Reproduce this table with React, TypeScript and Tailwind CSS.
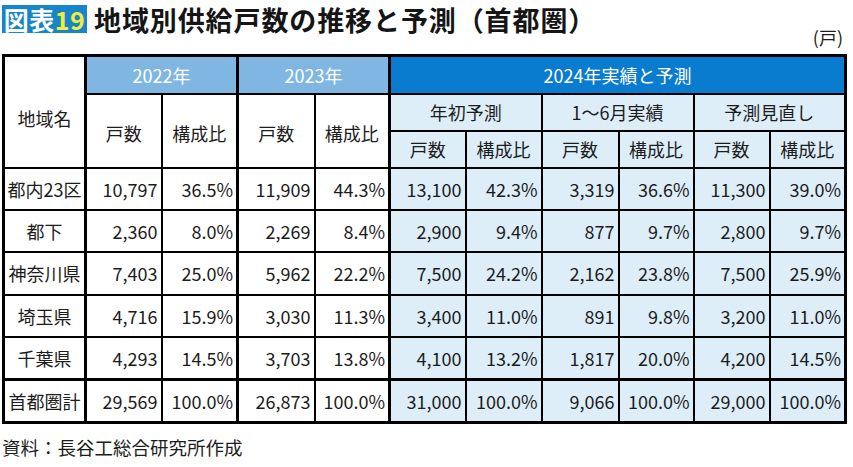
import React from "react";

const rows: string[][] = [
  ["都内23区", "10,797", "36.5%", "11,909", "44.3%", "13,100", "42.3%", "3,319", "36.6%", "11,300", "39.0%"],
  ["都下", "2,360", "8.0%", "2,269", "8.4%", "2,900", "9.4%", "877", "9.7%", "2,800", "9.7%"],
  ["神奈川県", "7,403", "25.0%", "5,962", "22.2%", "7,500", "24.2%", "2,162", "23.8%", "7,500", "25.9%"],
  ["埼玉県", "4,716", "15.9%", "3,030", "11.3%", "3,400", "11.0%", "891", "9.8%", "3,200", "11.0%"],
  ["千葉県", "4,293", "14.5%", "3,703", "13.8%", "4,100", "13.2%", "1,817", "20.0%", "4,200", "14.5%"],
  ["首都圏計", "29,569", "100.0%", "26,873", "100.0%", "31,000", "100.0%", "9,066", "100.0%", "29,000", "100.0%"],
];

const widths = [82, 76, 76, 77, 75, 76, 76, 77, 75, 76, 76];
const rowHeights = ["h-[42px]", "h-[42px]", "h-[43px]", "h-[42px]", "h-[43px]", "h-[43px]"];

export default function App() {
  const font = { fontFamily: '"Noto Sans CJK JP", "Noto Sans", sans-serif' };
  return (
    <div className="w-[853px] h-[467px] bg-white text-[#1c1c1c] overflow-hidden" style={font}>
      <div className="flex items-center pt-[5px] pl-[2px] h-[33px]">
        <div className="h-[28px] w-[85px] bg-[#1686c9] flex items-center justify-center text-[25px] font-bold leading-none tracking-[0.5px]">
          <span className="text-white">図表</span>
          <span className="text-[#f3ec3c]">19</span>
        </div>
        <div className="ml-[7px] text-[27px] font-bold leading-none tracking-[0.9px] text-[#151515]">
          地域別供給戸数の推移と予測（首都圏）
        </div>
      </div>
      <div className="h-[21px] flex justify-end items-center pb-[14px] pr-[10px] text-[18px] leading-none">
        (戸)
      </div>
      <table className="ml-[2px] border-collapse border-[3px] border-black table-fixed text-[18px] leading-none">
        <colgroup>
          {widths.map((w, i) => (
            <col key={i} style={{ width: w }} />
          ))}
        </colgroup>
        <tbody>
          <tr className="h-[38px]">
            <td rowSpan={3} className="border-2 border-black bg-white text-center align-middle pt-[12px]">
              地域名
            </td>
            <td colSpan={2} className="border-2 border-l-[3px] border-black bg-[#80b7e2] text-white text-center">
              2022年
            </td>
            <td colSpan={2} className="border-2 border-l-[3px] border-black bg-[#80b7e2] text-white text-center">
              2023年
            </td>
            <td colSpan={6} className="border-2 border-l-[3px] border-black bg-[#0a7cd0] text-white text-center">
              2024年実績と予測
            </td>
          </tr>
          <tr className="h-[37px]">
            <td rowSpan={2} className="border-2 border-l-[3px] border-black bg-white text-center pt-[4px]">戸数</td>
            <td rowSpan={2} className="border-2 border-black bg-white text-center pt-[4px]">構成比</td>
            <td rowSpan={2} className="border-2 border-l-[3px] border-black bg-white text-center pt-[4px]">戸数</td>
            <td rowSpan={2} className="border-2 border-black bg-white text-center pt-[4px]">構成比</td>
            <td colSpan={2} className="border-2 border-l-[3px] border-black bg-[#ddeef9] text-center">年初予測</td>
            <td colSpan={2} className="border-2 border-black bg-[#ddeef9] text-center">1〜6月実績</td>
            <td colSpan={2} className="border-2 border-black bg-[#ddeef9] text-center">予測見直し</td>
          </tr>
          <tr className="h-[37px]">
            {["戸数", "構成比", "戸数", "構成比", "戸数", "構成比"].map((t, i) => (
              <td
                key={i}
                className={
                  "border-2 border-black bg-[#ddeef9] text-center" + (i === 0 ? " border-l-[3px]" : "")
                }
              >
                {t}
              </td>
            ))}
          </tr>
          {rows.map((r, ri) => (
            <tr key={ri} className={rowHeights[ri] + (ri === 5 ? " border-t-[3px] border-black" : "")}>
              {r.map((c, ci) => {
                const thickL = ci === 1 || ci === 3 || ci === 5;
                const light = ci >= 5;
                const cls =
                  "border-2 border-black " +
                  (ri === 5 ? "border-t-[3px] " : "") +
                  (thickL ? "border-l-[3px] " : "") +
                  (light ? "bg-[#ddeef9] " : "bg-white ") +
                  (ci === 0 ? "text-center" : "text-right pr-[3px]");
                return (
                  <td key={ci} className={cls}>
                    {c}
                  </td>
                );
              })}
            </tr>
          ))}
        </tbody>
      </table>
      <div className="mt-[14px] pl-[2px] text-[18.5px] leading-none">資料：長谷工総合研究所作成</div>
    </div>
  );
}
